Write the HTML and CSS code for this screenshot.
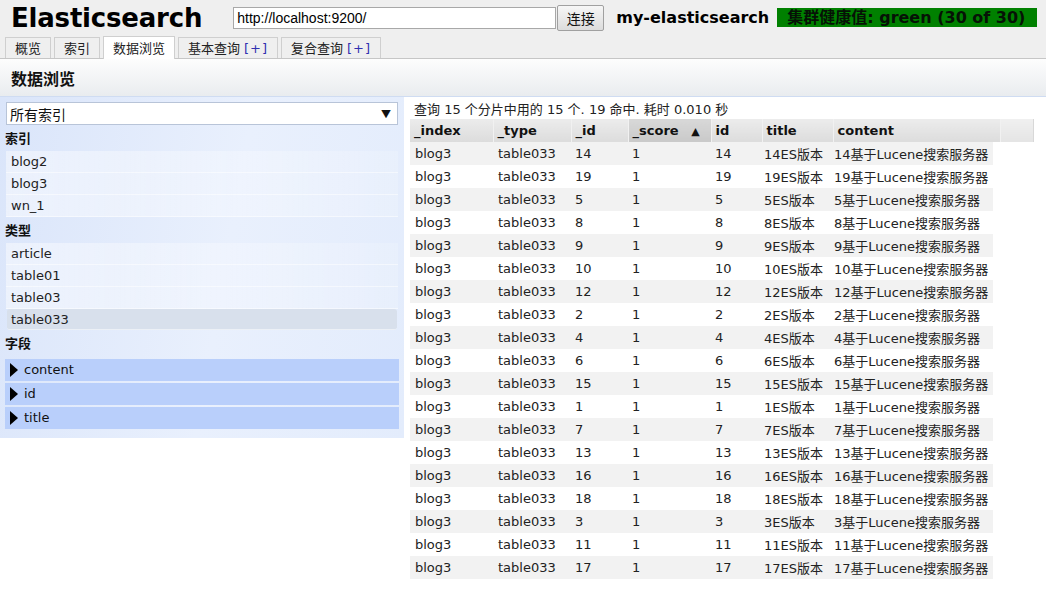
FILE: index.html
```html
<!DOCTYPE html>
<html lang="zh-CN">
<head>
<meta charset="utf-8">
<title>Elasticsearch Head</title>
<link rel="stylesheet" href="styles.css">
</head>
<body>
<div class="header">
  <div class="topbar">
    <h1 class="logo">Elasticsearch</h1>
    <input class="url" type="text" value="http://localhost:9200/">
    <button class="connect">连接</button>
    <span class="cluster">my-elasticsearch</span>
    <span class="health">集群健康值: green (30 of 30)</span>
  </div>
  <div class="tabs">
    <div class="tab">概览</div>
    <div class="tab">索引</div>
    <div class="tab active">数据浏览</div>
    <div class="tab">基本查询 <span class="plus">[+]</span></div>
    <div class="tab">复合查询 <span class="plus">[+]</span></div>
  </div>
</div>
<div class="titlebar">数据浏览</div>
<div class="main">
  <div class="sidebar">
    <div class="select"><span>所有索引</span><span class="arrow">▼</span></div>
    <div class="sec">索引</div>
    <div class="item">blog2</div>
    <div class="item">blog3</div>
    <div class="item">wn_1</div>
    <div class="sec">类型</div>
    <div class="item">article</div>
    <div class="item">table01</div>
    <div class="item">table03</div>
    <div class="item selected">table033</div>
    <div class="sec">字段</div>
    <div class="field"><span class="tri"></span>content</div>
    <div class="field"><span class="tri"></span>id</div>
    <div class="field"><span class="tri"></span>title</div>
  </div>
  <div class="results">
    <div class="info">查询 15 个分片中用的 15 个. 19 命中. 耗时 0.010 秒</div>
    <table class="head">
      <colgroup><col class="c1"><col class="c2"><col class="c3"><col class="c4"><col class="c5"><col class="c6"><col class="c7h"><col class="c8"></colgroup>
      <tr><th>_index</th><th>_type</th><th>_id</th><th class="sorted">_score <span class="up">▲</span></th><th>id</th><th>title</th><th>content</th><th class="filler"></th></tr>
    </table>
    <table class="body">
      <colgroup><col class="c1"><col class="c2"><col class="c3"><col class="c4"><col class="c5"><col class="c6"><col class="c7"></colgroup>
      <tr><td>blog3</td><td>table033</td><td>14</td><td>1</td><td>14</td><td>14ES版本</td><td>14基于Lucene搜索服务器</td></tr>
      <tr><td>blog3</td><td>table033</td><td>19</td><td>1</td><td>19</td><td>19ES版本</td><td>19基于Lucene搜索服务器</td></tr>
      <tr><td>blog3</td><td>table033</td><td>5</td><td>1</td><td>5</td><td>5ES版本</td><td>5基于Lucene搜索服务器</td></tr>
      <tr><td>blog3</td><td>table033</td><td>8</td><td>1</td><td>8</td><td>8ES版本</td><td>8基于Lucene搜索服务器</td></tr>
      <tr><td>blog3</td><td>table033</td><td>9</td><td>1</td><td>9</td><td>9ES版本</td><td>9基于Lucene搜索服务器</td></tr>
      <tr><td>blog3</td><td>table033</td><td>10</td><td>1</td><td>10</td><td>10ES版本</td><td>10基于Lucene搜索服务器</td></tr>
      <tr><td>blog3</td><td>table033</td><td>12</td><td>1</td><td>12</td><td>12ES版本</td><td>12基于Lucene搜索服务器</td></tr>
      <tr><td>blog3</td><td>table033</td><td>2</td><td>1</td><td>2</td><td>2ES版本</td><td>2基于Lucene搜索服务器</td></tr>
      <tr><td>blog3</td><td>table033</td><td>4</td><td>1</td><td>4</td><td>4ES版本</td><td>4基于Lucene搜索服务器</td></tr>
      <tr><td>blog3</td><td>table033</td><td>6</td><td>1</td><td>6</td><td>6ES版本</td><td>6基于Lucene搜索服务器</td></tr>
      <tr><td>blog3</td><td>table033</td><td>15</td><td>1</td><td>15</td><td>15ES版本</td><td>15基于Lucene搜索服务器</td></tr>
      <tr><td>blog3</td><td>table033</td><td>1</td><td>1</td><td>1</td><td>1ES版本</td><td>1基于Lucene搜索服务器</td></tr>
      <tr><td>blog3</td><td>table033</td><td>7</td><td>1</td><td>7</td><td>7ES版本</td><td>7基于Lucene搜索服务器</td></tr>
      <tr><td>blog3</td><td>table033</td><td>13</td><td>1</td><td>13</td><td>13ES版本</td><td>13基于Lucene搜索服务器</td></tr>
      <tr><td>blog3</td><td>table033</td><td>16</td><td>1</td><td>16</td><td>16ES版本</td><td>16基于Lucene搜索服务器</td></tr>
      <tr><td>blog3</td><td>table033</td><td>18</td><td>1</td><td>18</td><td>18ES版本</td><td>18基于Lucene搜索服务器</td></tr>
      <tr><td>blog3</td><td>table033</td><td>3</td><td>1</td><td>3</td><td>3ES版本</td><td>3基于Lucene搜索服务器</td></tr>
      <tr><td>blog3</td><td>table033</td><td>11</td><td>1</td><td>11</td><td>11ES版本</td><td>11基于Lucene搜索服务器</td></tr>
      <tr><td>blog3</td><td>table033</td><td>17</td><td>1</td><td>17</td><td>17ES版本</td><td>17基于Lucene搜索服务器</td></tr>
    </table>
  </div>
</div>
</body>
</html>
```

FILE: styles.css
```css
* { box-sizing: border-box; }
html, body { margin: 0; padding: 0; background: #fff; }
body {
  font-family: "DejaVu Sans", "Noto Sans CJK SC", sans-serif;
  font-size: 13px;
  color: #111;
  width: 1046px;
  height: 604px;
  overflow: hidden;
}

.header { background: #efefef; border-bottom: 1px solid #c6c6c6; }
.topbar {
  height: 35px;
  display: flex;
  align-items: center;
  padding-left: 11px;
}
.logo {
  margin: 0 31px 0 0;
  font-family: "DejaVu Sans", sans-serif;
  font-weight: bold;
  font-size: 26px;
  color: #000;
  letter-spacing: -0.2px;
  line-height: 30px;
}
.url {
  width: 323px;
  height: 22px;
  border: 1px solid #a8a8a8;
  background: #fff;
  font-family: "Liberation Sans", sans-serif;
  font-size: 14px;
  padding: 0 3px;
  color: #000;
  margin: 0;
}
.connect {
  margin: 0 0 0 1px;
  width: 47px;
  height: 26px;
  border: 1px solid #a0a0a0;
  border-radius: 2px;
  background: linear-gradient(#f6f6f6, #dcdcdc);
  font-family: "Noto Sans CJK SC", sans-serif;
  font-size: 14px;
  color: #111;
  padding: 0;
}
.cluster {
  margin-left: 12px;
  font-family: "DejaVu Sans", sans-serif;
  font-weight: bold;
  font-size: 16px;
  color: #000;
}
.health {
  margin-left: 8px;
  width: 260px;
  height: 19px;
  line-height: 19px;
  background: #008000;
  color: #061206;
  font-weight: bold;
  font-size: 16px;
  padding-left: 10px;
  white-space: nowrap;
  overflow: hidden;
  font-family: "DejaVu Sans", "Noto Sans CJK SC", sans-serif;
}

.tabs {
  display: flex;
  padding: 2px 0 0 5px;
  height: 23px;
  align-items: flex-end;
}
.tab {
  height: 21px;
  line-height: 20px;
  padding: 0 9px;
  margin-right: 3px;
  border: 1px solid #cfcfcf;
  border-bottom: none;
  background: #efefef;
  font-family: "Noto Sans CJK SC", sans-serif;
  font-size: 13px;
  color: #222;
  position: relative;
}
.tab.active {
  background: #fff;
  height: 23px;
  margin-bottom: -1px;
  line-height: 22px;
}
.tab .plus {
  color: #3030b0;
  font-family: "DejaVu Sans", sans-serif;
  font-size: 13px;
  letter-spacing: 1px;
  margin-left: 1px;
}

.titlebar {
  height: 38px;
  line-height: 38px;
  padding-left: 11px;
  background: linear-gradient(#fdfdfd, #e9ecef);
  border-bottom: 1px solid #cfdcf2;
  font-family: "Noto Sans CJK SC", sans-serif;
  font-weight: bold;
  font-size: 16px;
  color: #111;
}

.main { display: flex; align-items: flex-start; }

.sidebar {
  width: 404px;
  flex: none;
  padding: 5px 6px 7px 6px;
  background: linear-gradient(100deg, #dae5fa 0%, #e9f0fd 55%, #e3ecfc 100%);
}
.select {
  height: 23px;
  background: #fff;
  border: 1px solid #b8c4d8;
  display: flex;
  justify-content: space-between;
  align-items: center;
  padding: 0 6px 0 3px;
  font-family: "Noto Sans CJK SC", sans-serif;
  font-size: 14px;
  color: #111;
}
.select .arrow { font-size: 10px; color: #111; }
.sec {
  height: 20px;
  line-height: 20px;
  margin: 3px 0 3px -1px;
  font-family: "Noto Sans CJK SC", sans-serif;
  font-weight: bold;
  font-size: 13px;
  color: #111;
}
.item {
  height: 22px;
  line-height: 21px;
  padding-left: 5px;
  background: linear-gradient(90deg, rgba(255,255,255,0.45), rgba(255,255,255,0.15));
  border-bottom: 1px solid rgba(255,255,255,0.5);
  color: #222;
}
.item.selected {
  background: #d8e0ec;
  border-radius: 3px;
  margin: 0 1px;
  padding-left: 4px;
  height: 21px;
}
.field {
  height: 22px;
  line-height: 22px;
  margin: 0 -1px 2px -1px;
  background: #b9cffb;
  display: flex;
  align-items: center;
  color: #111;
}
.sec + .field { margin-top: 6px; }
.tri {
  width: 0;
  height: 0;
  border-top: 7px solid transparent;
  border-bottom: 7px solid transparent;
  border-left: 8px solid #000;
  margin: 0 6px 0 5px;
}

.results { padding: 4px 0 0 6px; }
.info {
  height: 18px;
  line-height: 18px;
  font-family: "DejaVu Sans", "Noto Sans CJK SC", sans-serif;
  font-size: 13px;
  color: #222;
  padding-left: 4px;
}
table { border-collapse: collapse; table-layout: fixed; }
.c1 { width: 83px; } .c2 { width: 78px; } .c3 { width: 57px; } .c4 { width: 83px; }
.c5 { width: 51px; } .c6 { width: 71px; } .c7 { width: 160px; } .c7h { width: 167px; } .c8 { width: 33px; }
table.head { width: 623px; }
table.body { width: 583px; }
th {
  height: 23px;
  text-align: left;
  padding: 0 0 0 4px;
  font-weight: bold;
  font-size: 13px;
  color: #111;
  background: linear-gradient(#ececec, #dcdcdc);
  border-left: 1px solid #f1f1f1;
  white-space: nowrap;
}
th:first-child { border-left: none; }
th.sorted { background: linear-gradient(#d8d8d8, #c9c9c9); }
th .up { font-size: 11px; margin-left: 8px; }
th.filler { background: linear-gradient(#f0f0f0, #e4e4e4); border-right: 1px solid #d8d8d8; }
td {
  height: 23px;
  padding: 0 0 0 5px;
  white-space: nowrap;
  overflow: hidden;
  color: #222;
  font-size: 13px;
}
td:nth-child(3), td:nth-child(4), td:nth-child(5) { padding-left: 4px; }
td:nth-child(6) { padding-left: 2px; }
td:nth-child(7) { padding-left: 1px; }
tr:nth-child(odd) td { background: #f2f2f2; }
```
